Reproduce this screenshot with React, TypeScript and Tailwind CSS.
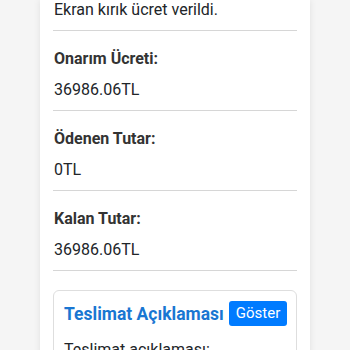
import React from "react";

const rows = [
  { label: "Onarım Ücreti:", value: "36986.06TL" },
  { label: "Ödenen Tutar:", value: "0TL" },
  { label: "Kalan Tutar:", value: "36986.06TL" },
];

function App() {
  return (
    <div
      className="min-h-screen bg-[#f5f5f5] px-[40px] overflow-hidden"
      style={{ fontFamily: "Roboto, 'Noto Sans', sans-serif" }}
    >
      <div className="bg-white shadow-[0_0_7px_rgba(0,0,0,0.09)] px-[13px] pb-[20px] min-h-[350px]">
        <p className="text-[16px] leading-[20px] text-[#212529] pl-[1px]">
          Ekran kırık ücret verildi.
        </p>
        <div className="mt-[10px] h-[1px] bg-[#d6d6d6]" />

        {rows.map((r) => (
          <div key={r.label}>
            <div className="pt-[16px] pb-[8px] pl-[1px]">
              <p className="text-[16px] leading-[24px] font-bold text-[#333]">{r.label}</p>
              <p className="mt-[7px] text-[16px] leading-[24px] text-[#212529]">{r.value}</p>
            </div>
            <div className="h-[1px] bg-[#d6d6d6]" />
          </div>
        ))}

        {/* teslimat card */}
        <div className="mt-[19px] border border-[#dedede] rounded-[6px] p-[10px]">
          <div className="flex items-center gap-[5px]">
            <h3 className="whitespace-nowrap text-[17.5px] leading-[24px] font-bold text-[#1976d2]">
              Teslimat Açıklaması
            </h3>
            <button className="bg-[#007bff] text-white text-[15px] leading-[25px] px-[7px] rounded-[3px]">
              Göster
            </button>
          </div>
          <p className="mt-[14px] text-[16px] leading-[20px] text-[#212529]">
            Teslimat açıklaması:
          </p>
        </div>
      </div>
    </div>
  );
}

export default App;
